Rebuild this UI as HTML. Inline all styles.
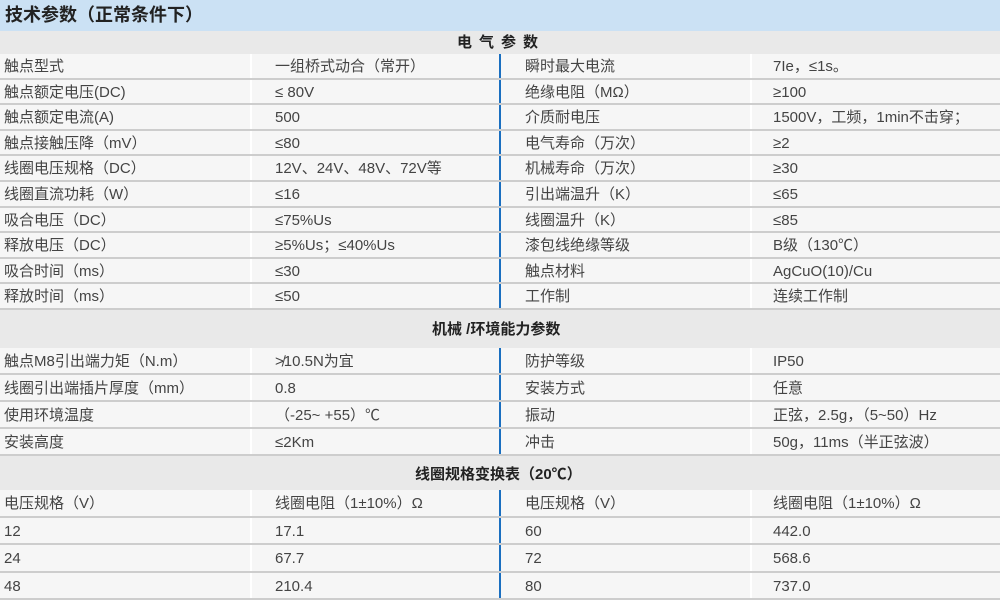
<!DOCTYPE html>
<html><head><meta charset="utf-8"><style>
*{margin:0;padding:0;box-sizing:border-box}
body{width:1000px;height:600px;overflow:hidden;background:#fff;font-family:"Liberation Sans","Noto Sans CJK SC",sans-serif;color:#444;font-size:15px;position:relative}
.t{position:absolute;left:0;top:0;width:1000px;height:31px;background:#cbe1f4;font-weight:bold;font-size:18px;color:#222;padding-left:5px;line-height:31px}
.h{position:absolute;left:0;width:1000px;background:#e9e9e9;font-weight:bold;font-size:15px;color:#222;}
.r{position:absolute;left:0;width:1000px;border-bottom:2px solid #cdcdcd}
.c{position:absolute;top:0;bottom:0;background:#f6f6f6;white-space:nowrap}
.c1{left:0;width:250px;padding-left:4px}
.c2{left:252px;width:247px;padding-left:23px}
.c3{border-left:2px solid #1a6fc0;left:499px;width:251px;padding-left:24px}
.c4{left:752px;width:248px;padding-left:21px}
</style></head><body>
<div class="t">技术参数（正常条件下）</div>
<div class="h" style="top:31px;height:23px;line-height:23px;padding-left:457px;letter-spacing:7px">电气参数</div>
<div class="h" style="top:310px;height:38px;line-height:40px;padding-left:432px">机械 /环境能力参数</div>
<div class="h" style="top:456px;height:34px;line-height:38px;padding-left:415px">线圈规格变换表（20℃）</div>
<script>
function rows(top,h,data){let s='';data.forEach((d,i)=>{let y=top+i*h;s+=`<div class="r" style="top:${y}px;height:${h}px;line-height:${h}px"><div class="c c1">${d[0]}</div><div class="c c2">${d[1]}</div><div class="c c3">${d[2]}</div><div class="c c4">${d[3]}</div></div>`});document.body.insertAdjacentHTML('beforeend',s)}
rows(54,25.6,[
["触点型式","一组桥式动合（常开）","瞬时最大电流","7Ie，≤1s。"],
["触点额定电压(DC)","≤ 80V","绝缘电阻（MΩ）","≥100"],
["触点额定电流(A)","500","介质耐电压","1500V，工频，1min不击穿；"],
["触点接触压降（mV）","≤80","电气寿命（万次）","≥2"],
["线圈电压规格（DC）","12V、24V、48V、72V等","机械寿命（万次）","≥30"],
["线圈直流功耗（W）","≤16","引出端温升（K）","≤65"],
["吸合电压（DC）","≤75%Us","线圈温升（K）","≤85"],
["释放电压（DC）","≥5%Us；≤40%Us","漆包线绝缘等级","B级（130℃）"],
["吸合时间（ms）","≤30","触点材料","AgCuO(10)/Cu"],
["释放时间（ms）","≤50","工作制","连续工作制"]]);
rows(348,27,[
["触点M8引出端力矩（N.m）","≯10.5N为宜","防护等级","IP50"],
["线圈引出端插片厚度（mm）","0.8","安装方式","任意"],
["使用环境温度","（-25~ +55）℃","振动","正弦，2.5g，（5~50）Hz"],
["安装高度","≤2Km","冲击","50g，11ms（半正弦波）"]]);
rows(490,27.5,[
["电压规格（V）","线圈电阻（1±10%）Ω","电压规格（V）","线圈电阻（1±10%）Ω"],
["12","17.1","60","442.0"],
["24","67.7","72","568.6"],
["48","210.4","80","737.0"]]);
</script>
</body></html>
